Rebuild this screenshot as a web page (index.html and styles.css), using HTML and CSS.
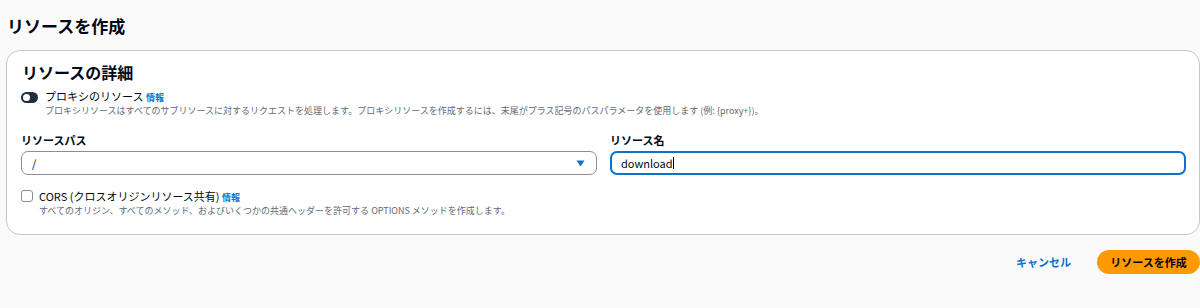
FILE: index.html
```html
<!DOCTYPE html>
<html lang="ja">
<head>
<meta charset="utf-8">
<link rel="stylesheet" href="styles.css">
</head>
<body>
<div class="page">
  <h1 class="page-title">リソースを作成</h1>
  <section class="card">
    <h2 class="card-title">リソースの詳細</h2>
    <div class="toggle-row">
      <span class="toggle"><span class="knob"></span></span>
      <div class="toggle-text">
        <div class="opt-label">プロキシのリソース <a class="info">情報</a></div>
        <div class="desc">プロキシリソースはすべてのサブリソースに対するリクエストを処理します。プロキシリソースを作成するには、末尾がプラス記号のパスパラメータを使用します (例: {proxy+})。</div>
      </div>
    </div>
    <div class="fields">
      <div class="field">
        <label class="field-label">リソースパス</label>
        <div class="select">
          <span>/</span>
          <svg class="caret" width="9" height="7" viewBox="0 0 9 7"><path d="M0.5 0.5h8L4.5 6.5z" fill="#0972d3"/></svg>
        </div>
      </div>
      <div class="field">
        <label class="field-label">リソース名</label>
        <div class="input focused">download<span class="cursor"></span></div>
      </div>
    </div>
    <div class="check-row">
      <span class="checkbox"></span>
      <div class="toggle-text">
        <div class="opt-label">CORS (クロスオリジンリソース共有) <a class="info">情報</a></div>
        <div class="desc">すべてのオリジン、すべてのメソッド、およびいくつかの共通ヘッダーを許可する OPTIONS メソッドを作成します。</div>
      </div>
    </div>
  </section>
  <div class="actions">
    <a class="cancel">キャンセル</a>
    <button class="primary">リソースを作成</button>
  </div>
</div>
</body>
</html>
```
FILE: styles.css
```css
* { box-sizing: border-box; }
html, body { margin: 0; padding: 0; }
body {
  background: #fafafa;
  font-family: "Noto Sans CJK JP", "Open Sans", sans-serif;
  color: #000716;
  width: 1200px;
  height: 308px;
  overflow: hidden;
}
.page { padding: 14px 0 0 6px; }
.page-title {
  font-size: 17px;
  font-weight: 700;
  margin: 0 0 12px 1px;
  line-height: 24px;
}
.card {
  background: #fff;
  border: 1px solid #c6c6cd;
  border-radius: 14px;
  width: 1194px;
  padding: 10px 14px 20px 14px;
  height: 185px;
}
.card-title {
  font-size: 16px;
  font-weight: 700;
  margin: 0 0 6px 1px;
  line-height: 22px;
}
.toggle-row, .check-row { display: flex; align-items: flex-start; gap: 7px; }
.toggle {
  width: 17px; height: 11px; border-radius: 6px;
  background: #232f3e;
  position: relative;
  margin-top: 3px;
  flex: none;
}
.knob {
  position: absolute; width: 7px; height: 7px; border-radius: 50%;
  background: #fff; left: 2px; top: 2px;
}
.opt-label { font-size: 11px; line-height: 14px; }
.info { color: #0972d3; font-size: 9px; font-weight: 700; }
.desc { font-size: 9px; line-height: 12px; color: #5f6b7a; }
.fields {
  display: grid;
  grid-template-columns: 576px 576px;
  gap: 13px;
  margin-top: 16px;
}
.field-label { display: block; font-size: 11px; font-weight: 700; line-height: 14px; margin-bottom: 4px; }
.select, .input {
  height: 24px;
  border: 1px solid #8c8c94;
  border-radius: 7px;
  display: flex; align-items: center;
  padding: 0 10px;
  font-size: 11px;
  justify-content: space-between;
}
.input { justify-content: flex-start; }
.input.focused { border: 2px solid #0972d3; padding: 0 9px; }
.cursor { width: 1px; height: 12px; background: #000; }
.caret { margin-right: 1px; }
.check-row { margin-top: 14px; gap: 6px; }
.checkbox {
  width: 12px; height: 12px; border: 1px solid #8c8c94; border-radius: 3px;
  margin-top: 1px; flex: none; background: #fff;
}
.actions {
  display: flex; justify-content: flex-end; align-items: center;
  gap: 26px; margin-top: 15px;
}
.cancel { color: #0972d3; font-size: 11px; font-weight: 700; }
.primary {
  background: #ff9900; border: none; border-radius: 12px;
  height: 24px; width: 103px;
  font-family: inherit; font-size: 11px; font-weight: 700; color: #000716;
  padding: 0;
}
```
